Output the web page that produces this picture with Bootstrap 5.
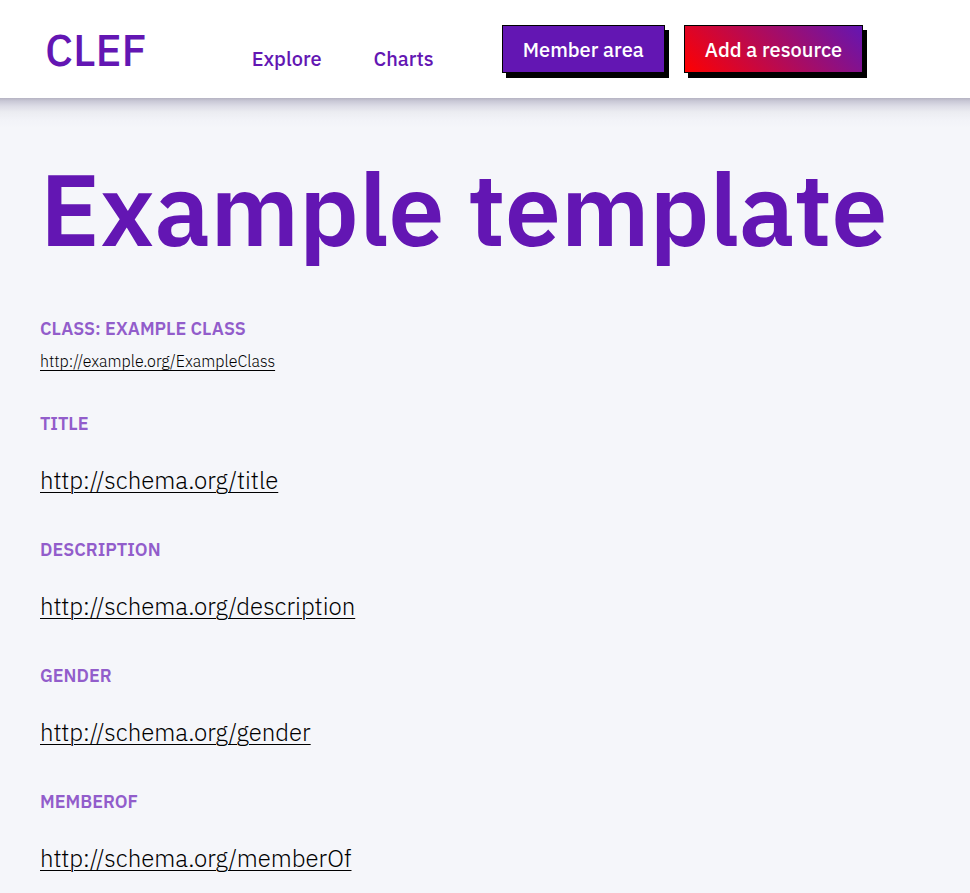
<!DOCTYPE html>
<html lang="en">
<head>
<meta charset="utf-8">
<meta name="viewport" content="width=device-width, initial-scale=1">
<title>CLEF - Example template</title>
<link href="https://cdn.jsdelivr.net/npm/bootstrap@5.3.0/dist/css/bootstrap.min.css" rel="stylesheet">
<style>
:root { --clef: #6316b3; }
body { font-family: "IBM Plex Sans", Roboto, sans-serif; background: #f5f6fa; color: #000; }
.clef-bar { min-height: 98px; padding: 0 40px; background: #fff; }
.clef-bar nav { padding-top: 2px; }
.clef-brand { font-size: 44px; line-height: 56px; font-weight: 500; color: var(--clef); padding: 0 5px; margin-right: 100px; }
.clef-link { font-size: 20px; line-height: 28px; font-weight: 500; color: var(--clef); text-decoration: none; margin-right: 52px; }
.clef-actions { gap: 19px; }
.clef-btn { font-size: 20px; line-height: 26px; font-weight: 500; color: #fff; padding: 11px 20px 9px; border: 1px solid #000; border-radius: 0; background: var(--clef); box-shadow: 4px 5px #000; }
.clef-btn:hover { color: #fff; background-color: #4d108c; }
.clef-btn-add { background-image: linear-gradient(45deg, #f00, var(--clef)); }
.clef-main { padding: 46px 40px; background: linear-gradient(#b5b3c2 0, #c9c8d6 3px, #dcdce6 8px, #ebecf1 14px, #f2f3f8 22px, #f5f6fa 30px); }
.clef-title { font-size: 100px; line-height: 130px; font-weight: 600; color: var(--clef); margin: 0 0 43px; }
.clef-label { font-size: 18px; line-height: 24px; font-weight: 600; color: #925dcb; text-transform: uppercase; margin: 0; }
.clef-main a { color: #000; font-weight: 300; text-decoration-thickness: 1px; text-underline-offset: 3px; }
.clef-small { font-size: 16px; line-height: 24px; }
.clef-uri { font-size: 24px; line-height: 38px; }
.clef-field { margin-top: 39px; gap: 25px; }
</style>
<script src="https://cdn.jsdelivr.net/npm/bootstrap@5.3.0/dist/js/bootstrap.bundle.min.js" defer></script>
</head>
<body>
<header class="clef-bar d-flex flex-wrap align-items-center">
  <nav class="d-flex flex-wrap align-items-baseline">
    <a class="clef-brand text-decoration-none" href="#">CLEF</a>
    <a class="clef-link" href="#">Explore</a>
    <a class="clef-link" href="#">Charts</a>
  </nav>
  <div class="clef-actions d-flex flex-wrap ms-3">
    <button type="button" class="btn clef-btn">Member area</button>
    <button type="button" class="btn clef-btn clef-btn-add">Add a resource</button>
  </div>
</header>
<main class="clef-main">
  <h1 class="clef-title">Example template</h1>
  <section class="d-flex flex-column align-items-start gap-2">
    <h2 class="clef-label">Class: Example class</h2>
    <a class="clef-small" href="#">http://example.org/ExampleClass</a>
  </section>
  <section class="clef-field d-flex flex-column align-items-start">
    <h2 class="clef-label">Title</h2>
    <a class="clef-uri" href="#">http://schema.org/title</a>
  </section>
  <section class="clef-field d-flex flex-column align-items-start">
    <h2 class="clef-label">Description</h2>
    <a class="clef-uri" href="#">http://schema.org/description</a>
  </section>
  <section class="clef-field d-flex flex-column align-items-start">
    <h2 class="clef-label">Gender</h2>
    <a class="clef-uri" href="#">http://schema.org/gender</a>
  </section>
  <section class="clef-field d-flex flex-column align-items-start">
    <h2 class="clef-label">memberOf</h2>
    <a class="clef-uri" href="#">http://schema.org/memberOf</a>
  </section>
</main>
</body>
</html>
